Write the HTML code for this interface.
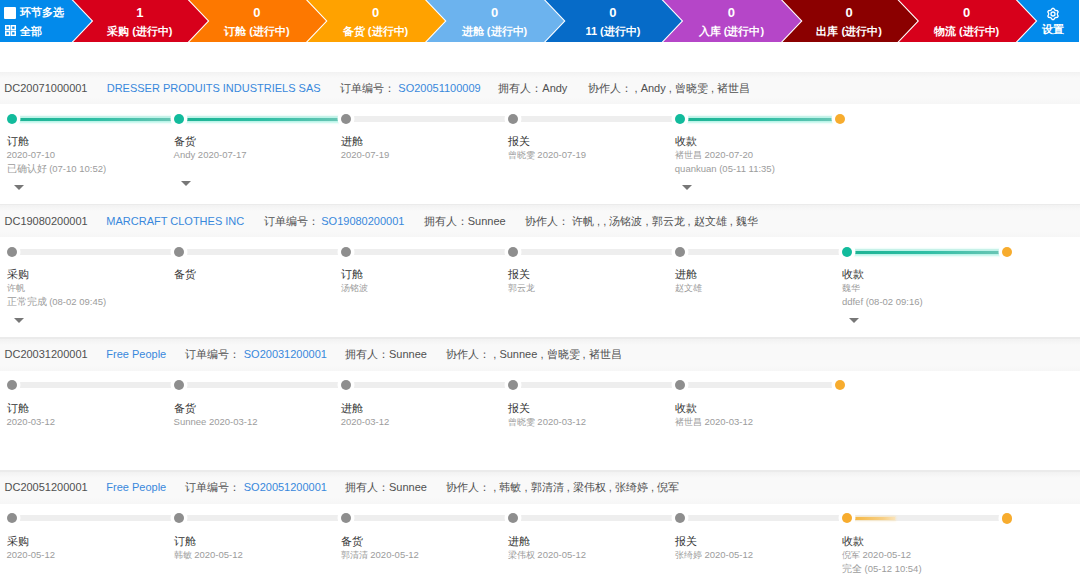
<!DOCTYPE html>
<html><head><meta charset="utf-8">
<style>
html,body{margin:0;padding:0;background:#fff;width:1080px;height:581px;overflow:hidden;position:relative;font-family:"Liberation Sans", sans-serif;}
.seg{position:absolute;top:0;width:120px;height:42px;color:#fff;text-align:center;font-weight:bold;font-size:11px;}
.seg .num{position:absolute;left:0;right:0;top:5px;font-size:13px;line-height:16px;}
.seg .lab{position:absolute;left:0;right:0;top:24px;line-height:14px;}
.row{position:absolute;left:0;width:1080px;height:133px;}
.row .bd{position:absolute;left:0;top:-0.5px;width:1080px;height:2px;background:#ebebeb;}
.row .band{position:absolute;left:0;top:1px;width:1080px;height:32px;background:linear-gradient(180deg,#f2f2f2 0px,#f9f9f9 6px,#f9f9f9 26px,#f6f6f6 32px);}
.hd{position:absolute;top:9.5px;left:0;height:14px;line-height:14px;font-size:11px;color:#505050;white-space:nowrap;}
.hd span{position:absolute;top:0;white-space:pre;}
.blue{color:#3888dc;}
.track{position:absolute;height:6px;background:#eeeeee;}
.prog{position:absolute;height:4px;}
.dot{position:absolute;width:10px;height:10px;border-radius:50%;box-shadow:0 0 0 3.5px #fff;}
.g{background:#8e8e8e;}
.t{background:#12bb9c;}
.o{background:#f7ac2e;}
.st{position:absolute;white-space:nowrap;}
.st .l1{font-size:11px;color:#333;line-height:14px;height:14px;}
.st .l2{font-size:9.5px;color:#9c9c9c;line-height:14px;height:14px;}
.caret{position:absolute;width:0;height:0;border-left:5px solid transparent;border-right:5px solid transparent;border-top:5px solid #777;}
</style></head><body>
<svg width="1080" height="42" style="position:absolute;left:0;top:0"><polygon points="0,0 71.7,0 91.7,21.0 71.7,42 0,42" fill="#028aeb"/><polygon points="73.2,0 187.8,0 207.8,21.0 187.8,42 73.2,42 93.2,21.0" fill="#d7001b"/><polygon points="189.3,0 306.0,0 326.0,21.0 306.0,42 189.3,42 209.3,21.0" fill="#fd7800"/><polygon points="307.5,0 425.0,0 445.0,21.0 425.0,42 307.5,42 327.5,21.0" fill="#ffa200"/><polygon points="426.5,0 544.0,0 564.0,21.0 544.0,42 426.5,42 446.5,21.0" fill="#6cb3ee"/><polygon points="545.5,0 661.7,0 681.7,21.0 661.7,42 545.5,42 565.5,21.0" fill="#066bc8"/><polygon points="663.2,0 781.0,0 801.0,21.0 781.0,42 663.2,42 683.2,21.0" fill="#b546c8"/><polygon points="782.5,0 897.5,0 917.5,21.0 897.5,42 782.5,42 802.5,21.0" fill="#8b0000"/><polygon points="899.0,0 1015.8,0 1035.8,21.0 1015.8,42 899.0,42 919.0,21.0" fill="#d7001b"/><polygon points="1017.3,0 1079,0 1079,42 1017.3,42 1037.3,21.0" fill="#028aeb"/></svg>
<div style="position:absolute;left:4px;top:7px;width:12px;height:12px;background:#fff;border-radius:1px"></div>
<div style="position:absolute;left:20px;top:5px;font-size:11px;font-weight:bold;color:#fff;line-height:14px">环节多选</div>
<svg style="position:absolute;left:5px;top:25px" width="11" height="11"><g fill="none" stroke="#fff" stroke-width="1.5"><rect x="0.75" y="0.75" width="3.8" height="3.8"/><rect x="6.45" y="0.75" width="3.8" height="3.8"/><rect x="0.75" y="6.45" width="3.8" height="3.8"/><rect x="6.45" y="6.45" width="3.8" height="3.8"/></g></svg>
<div style="position:absolute;left:20px;top:24px;font-size:11px;font-weight:bold;color:#fff;line-height:14px">全部</div>
<div class="seg" style="left:79.8px"><div class="num">1</div><div class="lab">采购 (进行中)</div></div><div class="seg" style="left:196.9px"><div class="num">0</div><div class="lab">订舱 (进行中)</div></div><div class="seg" style="left:315.5px"><div class="num">0</div><div class="lab">备货 (进行中)</div></div><div class="seg" style="left:434.5px"><div class="num">0</div><div class="lab">进舱 (进行中)</div></div><div class="seg" style="left:552.9px"><div class="num">0</div><div class="lab">11 (进行中)</div></div><div class="seg" style="left:671.4px"><div class="num">0</div><div class="lab">入库 (进行中)</div></div><div class="seg" style="left:789.2px"><div class="num">0</div><div class="lab">出库 (进行中)</div></div><div class="seg" style="left:906.6px"><div class="num">0</div><div class="lab">物流 (进行中)</div></div>
<svg style="position:absolute;left:1046.3px;top:7.2px" width="14" height="14" viewBox="0 0 14 14"><g fill="none" stroke="#fff" stroke-width="1.3" stroke-linejoin="round"><polygon points="6.27,1.45 7.73,1.45 8.68,2.93 9.68,3.51 11.44,3.59 12.17,4.86 11.36,6.43 11.36,7.57 12.17,9.14 11.44,10.41 9.68,10.49 8.68,11.07 7.73,12.55 6.27,12.55 5.32,11.07 4.32,10.49 2.56,10.41 1.83,9.14 2.64,7.57 2.64,6.43 1.83,4.86 2.56,3.59 4.32,3.51 5.32,2.93"/><circle cx="7" cy="7" r="2"/></g></svg>
<div style="position:absolute;left:1038px;top:22px;width:30px;text-align:center;font-size:11px;font-weight:bold;color:#fff;line-height:14px">设置</div>
<div class="row" style="top:71.00px"><div class="band"></div><div class="hd"><span style="left:4.3px">DC20071000001</span><span class="blue" style="left:106.7px">DRESSER PRODUITS INDUSTRIELS SAS</span><span style="left:340px">订单编号：</span><span class="blue" style="left:398.3px">SO20051100009</span><span style="left:498.3px">拥有人：Andy</span><span style="left:587.5px">协作人： , Andy , 曾晓雯 , 褚世昌</span></div><div class="track" style="left:11.5px;top:45.2px;width:828.32px"></div><div class="prog" style="left:11.5px;top:46.7px;height:3px;width:167.08px;background:linear-gradient(90deg,#1bb393,#2fbfa5 50%,#6ec6b6);box-shadow:0 0 2px 2px rgba(170,245,230,.75)"></div><div class="dot t" style="left:6.5px;top:43.2px"></div><div class="st" style="left:6.5px;top:63px"><div class="l1">订舱</div><div class="l2">2020-07-10</div><div class="l2">已确认好 (07-10 10:52)</div></div><div class="caret" style="left:13.5px;top:114px"></div><div class="prog" style="left:178.58px;top:46.7px;height:3px;width:167.08px;background:linear-gradient(90deg,#1bb393,#2fbfa5 50%,#6ec6b6);box-shadow:0 0 2px 2px rgba(170,245,230,.75)"></div><div class="dot t" style="left:173.58px;top:43.2px"></div><div class="st" style="left:173.58px;top:63px"><div class="l1">备货</div><div class="l2">Andy 2020-07-17</div></div><div class="caret" style="left:180.58px;top:110px"></div><div class="dot g" style="left:340.66px;top:43.2px"></div><div class="st" style="left:340.66px;top:63px"><div class="l1">进舱</div><div class="l2">2020-07-19</div></div><div class="dot g" style="left:507.74px;top:43.2px"></div><div class="st" style="left:507.74px;top:63px"><div class="l1">报关</div><div class="l2"><span style="font-size:9px">曾晓雯</span> 2020-07-19</div></div><div class="prog" style="left:679.82px;top:46.7px;height:3px;width:160.0px;background:linear-gradient(90deg,#1bb393,#2fbfa5 50%,#6ec6b6);box-shadow:0 0 2px 2px rgba(170,245,230,.75)"></div><div class="dot t" style="left:674.82px;top:43.2px"></div><div class="st" style="left:674.82px;top:63px"><div class="l1">收款</div><div class="l2"><span style="font-size:9px">褚世昌</span> 2020-07-20</div><div class="l2">quankuan (05-11 11:35)</div></div><div class="caret" style="left:681.82px;top:114px"></div><div class="dot o" style="left:834.57px;top:42.95px;width:10.5px;height:10.5px"></div></div>
<div class="row" style="top:204.33px"><div class="bd"></div><div class="band"></div><div class="hd"><span style="left:4.5px">DC19080200001</span><span class="blue" style="left:106.3px">MARCRAFT CLOTHES INC</span><span style="left:263.75px">订单编号：</span><span class="blue" style="left:321.25px">SO19080200001</span><span style="left:423.75px">拥有人：Sunnee</span><span style="left:525px">协作人： 许帆 , , 汤铭波 , 郭云龙 , 赵文雄 , 魏华</span></div><div class="track" style="left:11.5px;top:44.7px;width:995.4000000000001px"></div><div class="dot g" style="left:6.5px;top:42.7px"></div><div class="st" style="left:6.5px;top:63px"><div class="l1">采购</div><div class="l2"><span style="font-size:9px">许帆</span></div><div class="l2">正常完成 (08-02 09:45)</div></div><div class="caret" style="left:13.5px;top:114px"></div><div class="dot g" style="left:173.58px;top:42.7px"></div><div class="st" style="left:173.58px;top:63px"><div class="l1">备货</div></div><div class="dot g" style="left:340.66px;top:42.7px"></div><div class="st" style="left:340.66px;top:63px"><div class="l1">订舱</div><div class="l2"><span style="font-size:9px">汤铭波</span></div></div><div class="dot g" style="left:507.74px;top:42.7px"></div><div class="st" style="left:507.74px;top:63px"><div class="l1">报关</div><div class="l2"><span style="font-size:9px">郭云龙</span></div></div><div class="dot g" style="left:674.82px;top:42.7px"></div><div class="st" style="left:674.82px;top:63px"><div class="l1">进舱</div><div class="l2"><span style="font-size:9px">赵文雄</span></div></div><div class="prog" style="left:846.9000000000001px;top:46.2px;height:3px;width:160.0px;background:linear-gradient(90deg,#1bb393,#2fbfa5 50%,#6ec6b6);box-shadow:0 0 2px 2px rgba(170,245,230,.75)"></div><div class="dot t" style="left:841.9000000000001px;top:42.7px"></div><div class="st" style="left:841.9000000000001px;top:63px"><div class="l1">收款</div><div class="l2"><span style="font-size:9px">魏华</span></div><div class="l2">ddfef (08-02 09:16)</div></div><div class="caret" style="left:848.9000000000001px;top:114px"></div><div class="dot o" style="left:1001.6500000000001px;top:42.45px;width:10.5px;height:10.5px"></div></div>
<div class="row" style="top:337.66px"><div class="bd"></div><div class="band"></div><div class="hd"><span style="left:4.5px">DC20031200001</span><span class="blue" style="left:106.3px">Free People</span><span style="left:185px">订单编号：</span><span class="blue" style="left:243.75px">SO20031200001</span><span style="left:345px">拥有人：Sunnee</span><span style="left:446.25px">协作人： , Sunnee , 曾晓雯 , 褚世昌</span></div><div class="track" style="left:11.5px;top:44.4px;width:828.32px"></div><div class="dot g" style="left:6.5px;top:42.4px"></div><div class="st" style="left:6.5px;top:63px"><div class="l1">订舱</div><div class="l2">2020-03-12</div></div><div class="dot g" style="left:173.58px;top:42.4px"></div><div class="st" style="left:173.58px;top:63px"><div class="l1">备货</div><div class="l2">Sunnee 2020-03-12</div></div><div class="dot g" style="left:340.66px;top:42.4px"></div><div class="st" style="left:340.66px;top:63px"><div class="l1">进舱</div><div class="l2">2020-03-12</div></div><div class="dot g" style="left:507.74px;top:42.4px"></div><div class="st" style="left:507.74px;top:63px"><div class="l1">报关</div><div class="l2"><span style="font-size:9px">曾晓雯</span> 2020-03-12</div></div><div class="dot g" style="left:674.82px;top:42.4px"></div><div class="st" style="left:674.82px;top:63px"><div class="l1">收款</div><div class="l2"><span style="font-size:9px">褚世昌</span> 2020-03-12</div></div><div class="dot o" style="left:834.57px;top:42.15px;width:10.5px;height:10.5px"></div></div>
<div class="row" style="top:470.99px"><div class="bd"></div><div class="band"></div><div class="hd"><span style="left:4.5px">DC20051200001</span><span class="blue" style="left:106.3px">Free People</span><span style="left:185px">订单编号：</span><span class="blue" style="left:243.75px">SO20051200001</span><span style="left:345px">拥有人：Sunnee</span><span style="left:446.25px">协作人： , 韩敏 , 郭清清 , 梁伟权 , 张绮婷 , 倪军</span></div><div class="track" style="left:11.5px;top:44.4px;width:995.4000000000001px"></div><div class="dot g" style="left:6.5px;top:42.4px"></div><div class="st" style="left:6.5px;top:63px"><div class="l1">采购</div><div class="l2">2020-05-12</div></div><div class="dot g" style="left:173.58px;top:42.4px"></div><div class="st" style="left:173.58px;top:63px"><div class="l1">订舱</div><div class="l2"><span style="font-size:9px">韩敏</span> 2020-05-12</div></div><div class="dot g" style="left:340.66px;top:42.4px"></div><div class="st" style="left:340.66px;top:63px"><div class="l1">备货</div><div class="l2"><span style="font-size:9px">郭清清</span> 2020-05-12</div></div><div class="dot g" style="left:507.74px;top:42.4px"></div><div class="st" style="left:507.74px;top:63px"><div class="l1">进舱</div><div class="l2"><span style="font-size:9px">梁伟权</span> 2020-05-12</div></div><div class="dot g" style="left:674.82px;top:42.4px"></div><div class="st" style="left:674.82px;top:63px"><div class="l1">报关</div><div class="l2"><span style="font-size:9px">张绮婷</span> 2020-05-12</div></div><div class="prog" style="left:854.9000000000001px;top:45.9px;height:3px;width:40px;background:linear-gradient(90deg,#f5b845,#f7cf85 70%,#fae3b8);box-shadow:0 0 2px 1px rgba(250,225,170,.6)"></div><div class="dot o" style="left:841.9000000000001px;top:42.4px"></div><div class="st" style="left:841.9000000000001px;top:63px"><div class="l1">收款</div><div class="l2"><span style="font-size:9px">倪军</span> 2020-05-12</div><div class="l2">完全 (05-12 10:54)</div></div><div class="dot o" style="left:1001.6500000000001px;top:42.15px;width:10.5px;height:10.5px"></div></div>
</body></html>
